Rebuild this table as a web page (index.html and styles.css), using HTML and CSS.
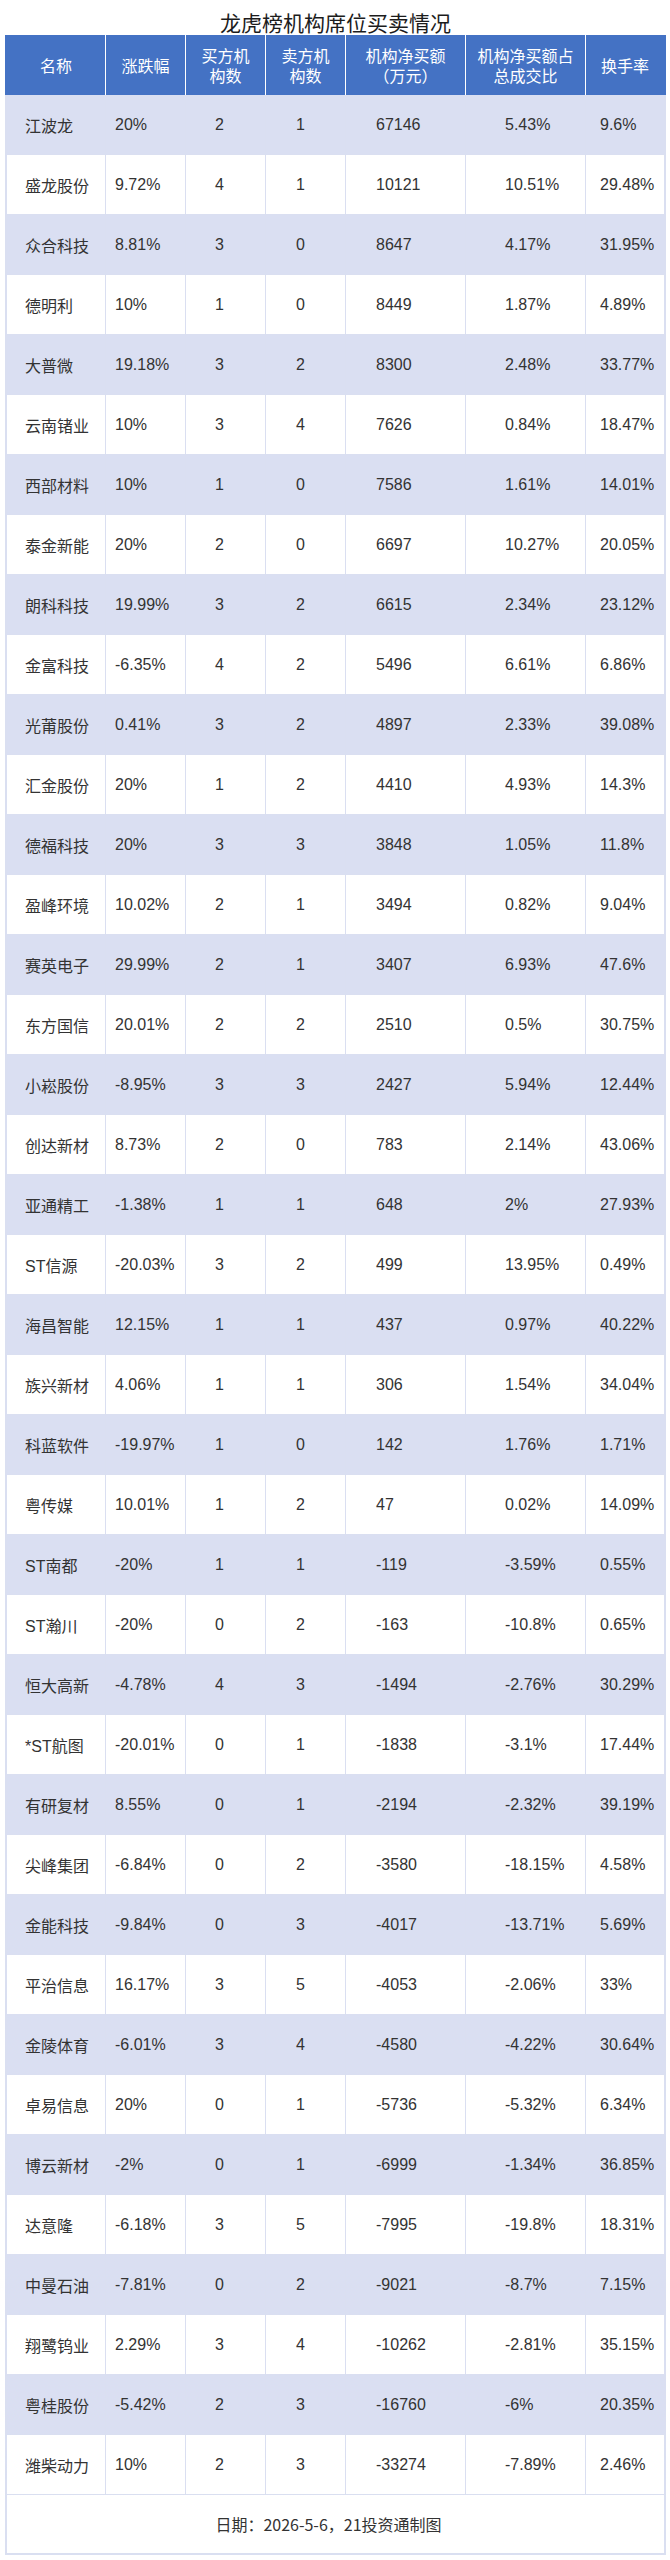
FILE: index.html
```html
<!DOCTYPE html>
<html lang="zh-CN">
<head>
<meta charset="utf-8">
<title>龙虎榜机构席位买卖情况</title>
<link rel="stylesheet" href="styles.css">
</head>
<body>
<div class="wrap">
  <div class="title">龙虎榜机构席位买卖情况</div>
  <table class="lhb">
    <colgroup>
      <col class="w-name"><col class="w-s"><col class="w-s"><col class="w-s"><col class="w-l"><col class="w-l"><col class="w-s">
    </colgroup>
    <thead>
      <tr>
        <th>名称</th>
        <th>涨跌幅</th>
        <th>买方机<br>构数</th>
        <th>卖方机<br>构数</th>
        <th>机构净买额<br>（万元）</th>
        <th>机构净买额占<br>总成交比</th>
        <th>换手率</th>
      </tr>
    </thead>
    <tbody>
      <tr><td>江波龙</td><td>20%</td><td>2</td><td>1</td><td>67146</td><td>5.43%</td><td>9.6%</td></tr>
      <tr><td>盛龙股份</td><td>9.72%</td><td>4</td><td>1</td><td>10121</td><td>10.51%</td><td>29.48%</td></tr>
      <tr><td>众合科技</td><td>8.81%</td><td>3</td><td>0</td><td>8647</td><td>4.17%</td><td>31.95%</td></tr>
      <tr><td>德明利</td><td>10%</td><td>1</td><td>0</td><td>8449</td><td>1.87%</td><td>4.89%</td></tr>
      <tr><td>大普微</td><td>19.18%</td><td>3</td><td>2</td><td>8300</td><td>2.48%</td><td>33.77%</td></tr>
      <tr><td>云南锗业</td><td>10%</td><td>3</td><td>4</td><td>7626</td><td>0.84%</td><td>18.47%</td></tr>
      <tr><td>西部材料</td><td>10%</td><td>1</td><td>0</td><td>7586</td><td>1.61%</td><td>14.01%</td></tr>
      <tr><td>泰金新能</td><td>20%</td><td>2</td><td>0</td><td>6697</td><td>10.27%</td><td>20.05%</td></tr>
      <tr><td>朗科科技</td><td>19.99%</td><td>3</td><td>2</td><td>6615</td><td>2.34%</td><td>23.12%</td></tr>
      <tr><td>金富科技</td><td>-6.35%</td><td>4</td><td>2</td><td>5496</td><td>6.61%</td><td>6.86%</td></tr>
      <tr><td>光莆股份</td><td>0.41%</td><td>3</td><td>2</td><td>4897</td><td>2.33%</td><td>39.08%</td></tr>
      <tr><td>汇金股份</td><td>20%</td><td>1</td><td>2</td><td>4410</td><td>4.93%</td><td>14.3%</td></tr>
      <tr><td>德福科技</td><td>20%</td><td>3</td><td>3</td><td>3848</td><td>1.05%</td><td>11.8%</td></tr>
      <tr><td>盈峰环境</td><td>10.02%</td><td>2</td><td>1</td><td>3494</td><td>0.82%</td><td>9.04%</td></tr>
      <tr><td>赛英电子</td><td>29.99%</td><td>2</td><td>1</td><td>3407</td><td>6.93%</td><td>47.6%</td></tr>
      <tr><td>东方国信</td><td>20.01%</td><td>2</td><td>2</td><td>2510</td><td>0.5%</td><td>30.75%</td></tr>
      <tr><td>小崧股份</td><td>-8.95%</td><td>3</td><td>3</td><td>2427</td><td>5.94%</td><td>12.44%</td></tr>
      <tr><td>创达新材</td><td>8.73%</td><td>2</td><td>0</td><td>783</td><td>2.14%</td><td>43.06%</td></tr>
      <tr><td>亚通精工</td><td>-1.38%</td><td>1</td><td>1</td><td>648</td><td>2%</td><td>27.93%</td></tr>
      <tr><td>ST信源</td><td>-20.03%</td><td>3</td><td>2</td><td>499</td><td>13.95%</td><td>0.49%</td></tr>
      <tr><td>海昌智能</td><td>12.15%</td><td>1</td><td>1</td><td>437</td><td>0.97%</td><td>40.22%</td></tr>
      <tr><td>族兴新材</td><td>4.06%</td><td>1</td><td>1</td><td>306</td><td>1.54%</td><td>34.04%</td></tr>
      <tr><td>科蓝软件</td><td>-19.97%</td><td>1</td><td>0</td><td>142</td><td>1.76%</td><td>1.71%</td></tr>
      <tr><td>粤传媒</td><td>10.01%</td><td>1</td><td>2</td><td>47</td><td>0.02%</td><td>14.09%</td></tr>
      <tr><td>ST南都</td><td>-20%</td><td>1</td><td>1</td><td>-119</td><td>-3.59%</td><td>0.55%</td></tr>
      <tr><td>ST瀚川</td><td>-20%</td><td>0</td><td>2</td><td>-163</td><td>-10.8%</td><td>0.65%</td></tr>
      <tr><td>恒大高新</td><td>-4.78%</td><td>4</td><td>3</td><td>-1494</td><td>-2.76%</td><td>30.29%</td></tr>
      <tr><td>*ST航图</td><td>-20.01%</td><td>0</td><td>1</td><td>-1838</td><td>-3.1%</td><td>17.44%</td></tr>
      <tr><td>有研复材</td><td>8.55%</td><td>0</td><td>1</td><td>-2194</td><td>-2.32%</td><td>39.19%</td></tr>
      <tr><td>尖峰集团</td><td>-6.84%</td><td>0</td><td>2</td><td>-3580</td><td>-18.15%</td><td>4.58%</td></tr>
      <tr><td>金能科技</td><td>-9.84%</td><td>0</td><td>3</td><td>-4017</td><td>-13.71%</td><td>5.69%</td></tr>
      <tr><td>平治信息</td><td>16.17%</td><td>3</td><td>5</td><td>-4053</td><td>-2.06%</td><td>33%</td></tr>
      <tr><td>金陵体育</td><td>-6.01%</td><td>3</td><td>4</td><td>-4580</td><td>-4.22%</td><td>30.64%</td></tr>
      <tr><td>卓易信息</td><td>20%</td><td>0</td><td>1</td><td>-5736</td><td>-5.32%</td><td>6.34%</td></tr>
      <tr><td>博云新材</td><td>-2%</td><td>0</td><td>1</td><td>-6999</td><td>-1.34%</td><td>36.85%</td></tr>
      <tr><td>达意隆</td><td>-6.18%</td><td>3</td><td>5</td><td>-7995</td><td>-19.8%</td><td>18.31%</td></tr>
      <tr><td>中曼石油</td><td>-7.81%</td><td>0</td><td>2</td><td>-9021</td><td>-8.7%</td><td>7.15%</td></tr>
      <tr><td>翔鹭钨业</td><td>2.29%</td><td>3</td><td>4</td><td>-10262</td><td>-2.81%</td><td>35.15%</td></tr>
      <tr><td>粤桂股份</td><td>-5.42%</td><td>2</td><td>3</td><td>-16760</td><td>-6%</td><td>20.35%</td></tr>
      <tr><td>潍柴动力</td><td>10%</td><td>2</td><td>3</td><td>-33274</td><td>-7.89%</td><td>2.46%</td></tr>
    </tbody>
    <tfoot>
      <tr><td class="foot" colspan="7">日期：2026-5-6，21投资通制图</td></tr>
    </tfoot>
  </table>
</div>
</body>
</html>
```

FILE: styles.css
```css
html, body {
  margin: 0;
  padding: 0;
  background: #ffffff;
}

body {
  font-family: "Liberation Sans", "Noto Sans CJK SC", sans-serif;
  color: #333333;
  text-spacing-trim: space-all;
}

.wrap {
  width: 661px;
  padding-left: 5px;
}

.title {
  box-sizing: border-box;
  height: 35px;
  padding-top: 10px;
  font-family: "Noto Sans CJK SC", sans-serif;
  font-size: 21px;
  line-height: 25px;
  color: #1c1c1c;
  text-align: center;
}

.lhb {
  width: 661px;
  table-layout: fixed;
  border-collapse: separate;
  border-spacing: 0;
}

.w-name { width: 101px; }
.w-s { width: 80px; }
.w-l { width: 120px; }

.lhb th,
.lhb td {
  box-sizing: border-box;
  padding: 0;
  font-size: 16px;
  white-space: nowrap;
}

.lhb thead tr { height: 60px; }

.lhb th {
  background: #4472c4;
  color: #ffffff;
  font-family: "Noto Sans CJK SC", sans-serif;
  font-weight: normal;
  line-height: 20px;
  text-align: center;
  text-spacing-trim: space-all;
  font-feature-settings: "halt" 0, "chws" 0;
  border-right: 1px solid #ffffff;
}

.lhb th:first-child { border-left: 2px solid #4472c4; }
.lhb th:last-child { border-right: 2px solid #4472c4; }

.lhb tbody tr { height: 60px; }

.lhb tbody tr:nth-child(odd) td { background: #dadff2; }
.lhb tbody tr:nth-child(even) td { background: #ffffff; }

.lhb td {
  color: #333333;
  text-align: left;
  vertical-align: middle;
  border-right: 1px solid #dadff1;
  border-bottom: 1px solid #dadff1;
}

.lhb td:first-child { border-left: 2px solid #dadff1; padding-left: 18px; }
.lhb td:last-child { border-right: 2px solid #dadff1; }

.lhb tbody td:nth-child(2) { padding-left: 9px; }
.lhb tbody td:nth-child(3) { padding-left: 29px; }
.lhb tbody td:nth-child(4) { padding-left: 30px; }
.lhb tbody td:nth-child(5) { padding-left: 30px; }
.lhb tbody td:nth-child(6) { padding-left: 39px; }
.lhb tbody td:nth-child(7) { padding-left: 14px; }

.lhb tfoot tr { height: 60px; }

.lhb td.foot {
  background: #ffffff;
  font-family: "Noto Sans CJK SC", sans-serif;
  text-align: center;
  padding-left: 0;
  padding-right: 14px;
  border-left: 2px solid #dadff1;
  border-right: 2px solid #dadff1;
  border-bottom: 2px solid #dadff1;
}
```
